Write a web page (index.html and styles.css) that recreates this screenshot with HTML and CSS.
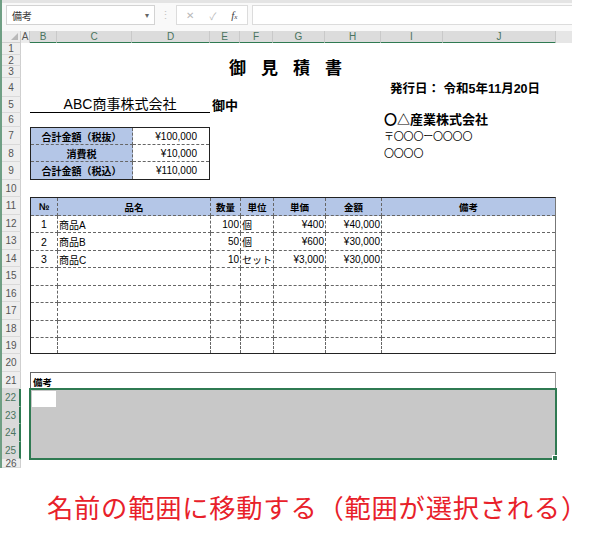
FILE: index.html
```html
<!DOCTYPE html>
<html lang="ja">
<head>
<meta charset="utf-8">
<title>御見積書</title>
<link rel="stylesheet" href="styles.css">
</head>
<body>
<div class="excel">
  <div class="toolbar">
    <div class="namebox"><span class="nb-text">備考</span><span class="caret">▾</span></div>
    <div class="sep">⋮</div>
    <div class="fxbox"><span class="ico">✕</span><span class="ico">✓</span><span class="fx">f<small>x</small></span></div>
    <div class="formula"></div>
  </div>
  <div class="sheet">
    <div class="corner"><span class="tri"></span></div>
    <div class="colheads">
      <div class="ch">A</div>
      <div class="ch sel">B</div>
      <div class="ch sel">C</div>
      <div class="ch sel">D</div>
      <div class="ch sel">E</div>
      <div class="ch sel">F</div>
      <div class="ch sel">G</div>
      <div class="ch sel">H</div>
      <div class="ch sel">I</div>
      <div class="ch sel">J</div>
      <div class="ch blank"></div>
    </div>
    <div class="rowheads">
      <div class="rh">1</div><div class="rh">2</div><div class="rh">3</div><div class="rh">4</div>
      <div class="rh">5</div><div class="rh">6</div><div class="rh">7</div><div class="rh">8</div>
      <div class="rh">9</div><div class="rh">10</div><div class="rh">11</div><div class="rh">12</div>
      <div class="rh">13</div><div class="rh">14</div><div class="rh">15</div><div class="rh">16</div>
      <div class="rh">17</div><div class="rh">18</div><div class="rh">19</div><div class="rh">20</div>
      <div class="rh">21</div><div class="rh sel">22</div><div class="rh sel">23</div><div class="rh sel">24</div>
      <div class="rh sel">25</div><div class="rh">26</div>
    </div>
    <div class="body">
      <div class="title">御見積書</div>
      <div class="date">発行日： 令和5年11月20日</div>
      <div class="client">ABC商事株式会社</div>
      <div class="onchu">御中</div>
      <div class="company">〇△産業株式会社</div>
      <div class="zip">〒〇〇〇ー〇〇〇〇</div>
      <div class="addr">〇〇〇〇</div>

      <div class="summary">
        <div class="lab">合計金額（税抜）</div><div class="val">¥100,000</div>
        <div class="lab">消費税</div><div class="val">¥10,000</div>
        <div class="lab">合計金額（税込）</div><div class="val">¥110,000</div>
      </div>

      <div class="items">
        <div class="th">№</div><div class="th">品名</div><div class="th">数量</div><div class="th">単位</div><div class="th">単価</div><div class="th">金額</div><div class="th">備考</div>
        <div class="cen">1</div><div class="lft">商品A</div><div class="rgt">100</div><div class="lft">個</div><div class="rgt">¥400</div><div class="rgt">¥40,000</div><div></div>
        <div class="cen">2</div><div class="lft">商品B</div><div class="rgt">50</div><div class="lft">個</div><div class="rgt">¥600</div><div class="rgt">¥30,000</div><div></div>
        <div class="cen">3</div><div class="lft">商品C</div><div class="rgt">10</div><div class="lft">セット</div><div class="rgt">¥3,000</div><div class="rgt">¥30,000</div><div></div>
        <div></div><div></div><div></div><div></div><div></div><div></div><div></div>
        <div></div><div></div><div></div><div></div><div></div><div></div><div></div>
        <div></div><div></div><div></div><div></div><div></div><div></div><div></div>
        <div></div><div></div><div></div><div></div><div></div><div></div><div></div>
        <div></div><div></div><div></div><div></div><div></div><div></div><div></div>
      </div>

      <div class="remarks-head">備考</div>
      <div class="selection">
        <div class="active"></div>
        <span class="handle"></span>
      </div>
    </div>
  </div>
</div>
<p class="caption">名前の範囲に移動する（範囲が選択される）</p>
</body>
</html>
```

FILE: styles.css
```css
* { box-sizing: border-box; }

html, body {
  margin: 0;
  padding: 0;
  background: #ffffff;
}

body {
  font-family: "Liberation Sans", "Noto Sans CJK JP", sans-serif;
  color: #000;
  width: 600px;
  height: 540px;
  overflow: hidden;
}

.excel {
  width: 572px;
  height: 468px;
  border-left: 2px solid #6f9f84;
  overflow: hidden;
  --cols: 9px 27px 75px 78px 30px 33px 52px 56px 62px 113px 16px;
  --rows: 12px 11px 12px 19px 16px 14px 18px 17px 18px 17px 18px 17px 18px 17px 18px 17px 18px 17px 17px 18px 17px 18px 17px 18px 17px 9px;
}

/* ---------- formula bar ---------- */
.toolbar {
  height: 31px;
  background: #f9f9f9;
  border-top: 3px solid #e4e4e4;
  display: flex;
  align-items: flex-start;
  padding: 2px 0 0 4px;
}

.namebox {
  width: 149px;
  height: 20px;
  background: #fff;
  border: 1px solid #d3d3d3;
  display: flex;
  align-items: center;
  justify-content: space-between;
  padding: 0 5px;
  font-size: 10px;
  color: #333;
}

.caret {
  font-size: 8px;
  color: #666;
}

.sep {
  width: 21px;
  height: 20px;
  display: flex;
  align-items: center;
  justify-content: center;
  color: #c4c4c4;
  font-size: 11px;
}

.fxbox {
  width: 72px;
  height: 20px;
  background: #fff;
  border: 1px solid #dcdcdc;
  display: flex;
  align-items: center;
  justify-content: space-around;
  padding: 0 2px;
}

.ico {
  font-size: 10px;
  color: #b8b8b8;
}

.fx {
  font-family: "Liberation Serif", serif;
  font-style: italic;
  font-size: 11px;
  color: #444;
}

.fx small {
  font-size: 7px;
}

.formula {
  margin-left: 4px;
  flex: 1;
  height: 20px;
  background: #fff;
  border: 1px solid #dcdcdc;
  border-right: none;
}

/* ---------- sheet ---------- */
.sheet {
  display: grid;
  grid-template-columns: 19px 551px;
  grid-template-rows: 12px 425px;
}

.corner {
  background: #ececec;
  border-right: 1px solid #cfcfcf;
  border-bottom: 1px solid #cfcfcf;
  display: flex;
  align-items: flex-end;
  justify-content: flex-end;
  padding: 0 2px 2px 0;
}

.tri {
  width: 0;
  height: 0;
  border-left: 7px solid transparent;
  border-bottom: 7px solid #b9b9b9;
}

.colheads {
  display: grid;
  grid-template-columns: var(--cols);
}

.ch {
  background: #ececec;
  border-right: 1px solid #c9c9c9;
  border-bottom: 1px solid #cfcfcf;
  font-size: 10px;
  line-height: 11px;
  text-align: center;
  color: #555;
}

.ch.sel {
  background: #dcdcdc;
  border-bottom: 2px solid #2f7a52;
  color: #4a7460;
}

.ch.blank {
  border-right: none;
  background: #e6e6e6;
}

.rowheads {
  display: grid;
  grid-template-rows: var(--rows);
}

.rh {
  background: #eeeeee;
  border-right: 1px solid #cfcfcf;
  border-bottom: 1px solid #d9d9d9;
  font-size: 10px;
  color: #555;
  display: flex;
  align-items: center;
  justify-content: center;
  overflow: hidden;
}

.rh.sel {
  background: #dadada;
  border-right: 2px solid #2f7a52;
  color: #4a7460;
}

.body {
  display: grid;
  grid-template-columns: var(--cols);
  grid-template-rows: var(--rows);
  background: #fff;
}

.title {
  grid-column: 2 / 11;
  grid-row: 2 / 4;
  display: flex;
  align-items: center;
  justify-content: center;
  font-size: 17px;
  font-weight: 700;
  letter-spacing: 15px;
}

.date {
  grid-column: 9 / 12;
  grid-row: 4;
  align-self: center;
  padding-left: 9px;
  font-size: 12.5px;
  font-weight: 700;
  white-space: nowrap;
}

.client {
  grid-column: 2 / 5;
  grid-row: 5;
  border-bottom: 1px solid #000;
  display: flex;
  align-items: flex-end;
  justify-content: center;
  font-size: 14px;
  line-height: 15px;
}

.onchu {
  grid-column: 5 / 7;
  grid-row: 5;
  align-self: end;
  padding-left: 2px;
  font-size: 13px;
  line-height: 15px;
  font-weight: 700;
}

.company {
  grid-column: 9 / 12;
  grid-row: 6;
  align-self: end;
  padding-left: 3px;
  font-size: 13px;
  line-height: 14px;
  font-weight: 700;
}

.zip,
.addr {
  grid-column: 9 / 12;
  align-self: end;
  padding-left: 3px;
  font-size: 10px;
  line-height: 13px;
  letter-spacing: -0.2px;
  padding-bottom: 2px;
  white-space: nowrap;
}

.zip { grid-row: 7; }
.addr { grid-row: 8; }

/* summary box */
.summary {
  grid-column: 2 / 5;
  grid-row: 7 / 10;
  border: 1px solid #222;
  display: grid;
  grid-template-columns: 102px 1fr;
  grid-template-rows: 1fr 1fr 1fr;
  font-size: 10px;
}

.summary > div {
  display: flex;
  align-items: center;
  border-bottom: 1px dashed #666;
}

.summary > div:nth-last-child(-n+2) {
  border-bottom: none;
}

.summary .lab {
  background: #b4c6e7;
  border-right: 1px dashed #666;
  justify-content: center;
  font-weight: 700;
}

.summary .val {
  justify-content: flex-end;
  padding-right: 12px;
}

/* items table */
.items {
  grid-column: 2 / 11;
  grid-row: 11 / 20;
  border: 1px solid #222;
  border-right-color: #777;
  display: grid;
  grid-template-columns: 27px 153px 30px 33px 52px 56px 1fr;
  grid-template-rows: 18px 17px 18px 17px 18px 17px 18px 17px 1fr;
  font-size: 10px;
}

.items > div {
  border-right: 1px dashed #666;
  border-bottom: 1px dashed #666;
  display: flex;
  align-items: center;
  white-space: nowrap;
  overflow: hidden;
}

.items > div:nth-child(7n) {
  border-right: none;
}

.items > div:nth-last-child(-n+7) {
  border-bottom: none;
}

.items .th {
  background: #b4c6e7;
  justify-content: center;
  font-weight: 700;
  font-size: 9.5px;
}

.items .cen { justify-content: center; font-size: 10.5px; }
.items .lft { justify-content: flex-start; padding-left: 1px; }
.items .rgt { justify-content: flex-end; padding-right: 1px; }

/* remarks */
.remarks-head {
  grid-column: 2 / 11;
  grid-row: 21;
  border: 1px solid #666;
  border-right-color: #999;
  border-bottom: none;
  display: flex;
  align-items: flex-end;
  padding-left: 2px;
  font-size: 9.5px;
  font-weight: 700;
  line-height: 12px;
}

.selection {
  grid-column: 2 / 11;
  grid-row: 22 / 26;
  margin: -1px;
  border: 2px solid #2f7a52;
  background: #c8c8c8;
  position: relative;
}

.active {
  width: 24px;
  height: 16px;
  margin: 1px 0 0 1px;
  background: #fff;
}

.handle {
  position: absolute;
  right: -3px;
  bottom: -3px;
  width: 4px;
  height: 4px;
  background: #2f7a52;
  border: 1px solid #fff;
  box-sizing: content-box;
}

/* caption */
.caption {
  margin: 24px 0 0 47px;
  font-family: "Noto Sans CJK JP", sans-serif;
  font-size: 26.3px;
  line-height: 30px;
  letter-spacing: 0.75px;
  color: #e8212a;
  white-space: nowrap;
}
```
